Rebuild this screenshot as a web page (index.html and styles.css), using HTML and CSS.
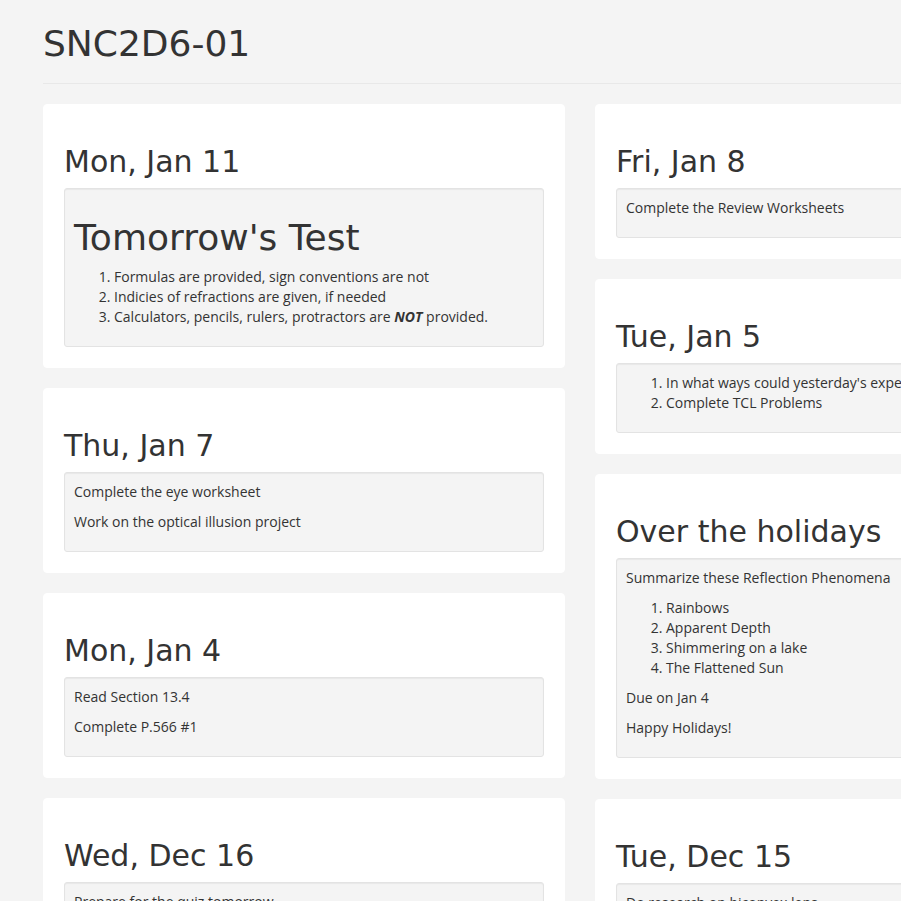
FILE: index.html
```html
<!DOCTYPE html>
<html lang="en">
<head>
<meta charset="utf-8">
<title>SNC2D6-01</title>
<link rel="stylesheet" href="styles.css">
</head>
<body>
<div class="page">
  <header class="page-header">
    <h1>SNC2D6-01</h1>
  </header>
  <div class="columns">
    <div class="column">
      <section class="card">
        <h2>Mon, Jan 11</h2>
        <div class="well">
          <h1>Tomorrow's Test</h1>
          <ol>
            <li>Formulas are provided, sign conventions are not</li>
            <li>Indicies of refractions are given, if needed</li>
            <li>Calculators, pencils, rulers, protractors are <strong><em>NOT</em></strong> provided.</li>
          </ol>
        </div>
      </section>
      <section class="card">
        <h2>Thu, Jan 7</h2>
        <div class="well">
          <p>Complete the eye worksheet</p>
          <p>Work on the optical illusion project</p>
        </div>
      </section>
      <section class="card">
        <h2>Mon, Jan 4</h2>
        <div class="well">
          <p>Read Section 13.4</p>
          <p>Complete P.566 #1</p>
        </div>
      </section>
      <section class="card">
        <h2>Wed, Dec 16</h2>
        <div class="well">
          <p>Prepare for the quiz tomorrow</p>
        </div>
      </section>
    </div>
    <div class="column">
      <section class="card">
        <h2>Fri, Jan 8</h2>
        <div class="well">
          <p>Complete the Review Worksheets</p>
        </div>
      </section>
      <section class="card">
        <h2>Tue, Jan 5</h2>
        <div class="well">
          <ol>
            <li>In what ways could yesterday's experiment be improved?</li>
            <li>Complete TCL Problems</li>
          </ol>
        </div>
      </section>
      <section class="card">
        <h2>Over the holidays</h2>
        <div class="well">
          <p>Summarize these Reflection Phenomena</p>
          <ol>
            <li>Rainbows</li>
            <li>Apparent Depth</li>
            <li>Shimmering on a lake</li>
            <li>The Flattened Sun</li>
          </ol>
          <p>Due on Jan 4</p>
          <p>Happy Holidays!</p>
        </div>
      </section>
      <section class="card">
        <h2>Tue, Dec 15</h2>
        <div class="well">
          <p>Do research on biconvex lens</p>
        </div>
      </section>
    </div>
  </div>
</div>
</body>
</html>
```
FILE: styles.css
```css
html, body {
  margin: 0;
  padding: 0;
  overflow: hidden;
}

body {
  background: #f4f4f4;
  color: #333;
  font-family: "Open Sans", "Liberation Sans", sans-serif;
  font-size: 14px;
  line-height: 20px;
}

.page {
  width: 1074px;
  padding: 0 0 40px 43px;
}

h1, h2 {
  font-family: "DejaVu Sans", "Liberation Sans", sans-serif;
  font-weight: normal;
  color: #333;
  line-height: 1.1;
}

h1 {
  font-size: 36px;
  margin: 20px 0 10px;
}

h2 {
  font-size: 30px;
  margin: 20px 0 10px;
}

.page-header {
  padding: 24px 0 9px;
  border-bottom: 1px solid #e8e8e8;
  margin-bottom: 20px;
}

.page-header h1 {
  margin: 0 0 10px;
}

.columns {
  display: flex;
  gap: 30px;
  align-items: flex-start;
}

.column {
  width: 522px;
  display: flex;
  flex-direction: column;
  gap: 20px;
}

.card {
  background: #fff;
  border: 1px solid #fff;
  border-radius: 4px;
  padding: 20px 20px 0;
}

.well {
  background: #f4f4f4;
  border: 1px solid #e3e3e3;
  border-radius: 3px;
  box-shadow: inset 0 1px 1px rgba(0, 0, 0, 0.05);
  padding: 9px;
  margin-bottom: 20px;
}

.well p {
  margin: 0 0 10px;
}

.well ol {
  margin: 0 0 10px;
  padding-left: 40px;
}
```
